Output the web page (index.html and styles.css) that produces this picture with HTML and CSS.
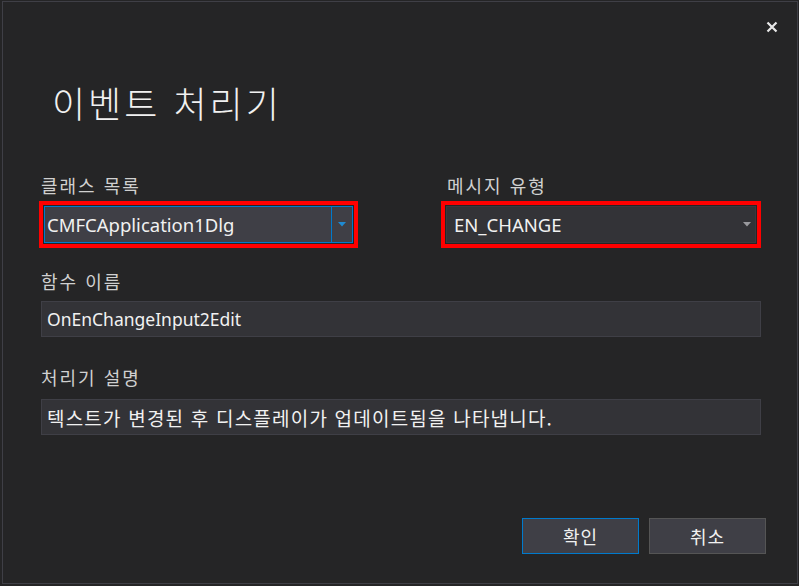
FILE: index.html
```html
<!DOCTYPE html>
<html lang="ko">
  <head>
    <meta charset="UTF-8" />
    <meta name="viewport" content="width=device-width, initial-scale=1.0" />
    <title>이벤트 처리기</title>
    <link rel="stylesheet" href="styles.css">
  </head>

  <body>
    <div class="dialog">
      <div class="dialog-head">
        <button class="close-btn" type="button" aria-label="닫기">
          <svg width="12" height="12" viewBox="0 0 12 12">
            <path d="M1.5 1.5 L10.5 10.5 M10.5 1.5 L1.5 10.5" stroke="#e8e8e8" stroke-width="2.2" fill="none" />
          </svg>
        </button>
      </div>

      <h1 class="title">이벤트 처리기</h1>

      <div class="row-two">
        <div class="field">
          <div class="label">클래스 목록</div>
          <div class="mark">
            <div class="combo active">
              <span class="combo-text">CMFCApplication1Dlg</span>
              <span class="combo-arrow">
                <svg width="8" height="5" viewBox="0 0 8 5"><path d="M0 0 H8 L4 4.5 Z" fill="#1f8ad2" /></svg>
              </span>
            </div>
          </div>
        </div>
        <div class="field">
          <div class="label">메시지 유형</div>
          <div class="mark">
            <div class="combo">
              <span class="combo-text">EN_CHANGE</span>
              <span class="combo-arrow">
                <svg width="8" height="5" viewBox="0 0 8 5"><path d="M0 0 H8 L4 4.5 Z" fill="#9a9a9e" /></svg>
              </span>
            </div>
          </div>
        </div>
      </div>

      <div class="label label-func">함수 이름</div>
      <div class="textbox">OnEnChangeInput2Edit</div>

      <div class="label label-desc">처리기 설명</div>
      <div class="textbox textbox-ko">텍스트가 변경된 후 디스플레이가 업데이트됨을 나타냅니다.</div>

      <div class="buttons">
        <button class="btn btn-ok" type="button">확인</button>
        <button class="btn" type="button">취소</button>
      </div>
    </div>
  </body>
</html>
```

FILE: styles.css
```css
html, body {
  margin: 0;
  padding: 0;
  background-color: #252526;
}

body {
  width: 799px;
  height: 586px;
  overflow: hidden;
  font-family: "Noto Sans", "Noto Sans CJK KR", sans-serif;
  color: #f1f1f1;
}

.dialog {
  box-sizing: border-box;
  width: 796px;
  height: 583px;
  margin: 1px 0 0 2px;
  border: 1px solid #3f3f46;
  background-color: #252526;
  padding: 0 35px 0 36px;
  display: flex;
  flex-direction: column;
}

.dialog-head {
  display: flex;
  justify-content: flex-end;
  margin-right: -16px;
  padding-top: 19px;
}

.close-btn {
  border: 0;
  padding: 0;
  background: none;
  width: 12px;
  height: 12px;
  display: block;
}

.close-btn svg {
  display: block;
}

.title {
  margin: 47px 0 0 13px;
  font-family: "Noto Sans CJK KR", sans-serif;
  font-weight: 300;
  font-size: 36px;
  line-height: 44px;
  letter-spacing: 3px;
  color: #f1f1f1;
}

.label {
  font-family: "Noto Sans CJK KR", sans-serif;
  font-size: 18px;
  line-height: 24px;
  letter-spacing: 2px;
  color: #d0d0d0;
  padding-left: 2px;
}

.row-two {
  display: flex;
  gap: 83px;
  margin-top: 49px;
}

.field {
  width: 319px;
}

.field + .field {
  width: 320px;
}

.field + .field .label {
  padding-left: 6px;
}

.mark {
  margin-top: 4px;
  border: 4px solid #ff0000;
  padding: 1px;
}

.combo {
  box-sizing: border-box;
  height: 37px;
  display: flex;
  align-items: center;
  background-color: #333337;
  border: 1px solid #3a3a3f;
}

.combo.active {
  background-color: #3f3f46;
  border-color: #007acc;
}

.combo-text {
  flex: 1;
  padding-left: 7px;
  font-size: 18.5px;
}

.combo.active .combo-text {
  padding-left: 2px;
}

.combo-arrow {
  width: 16px;
  align-self: stretch;
  display: flex;
  align-items: center;
  justify-content: center;
}

.combo.active .combo-arrow {
  width: 20px;
  border-left: 1px solid #007acc;
}

.label-func {
  margin-top: 21px;
}

.label-desc {
  margin-top: 28px;
}

.textbox {
  box-sizing: border-box;
  margin: 8px 0 0 2px;
  width: 720px;
  height: 36px;
  padding: 0 5px;
  display: flex;
  align-items: center;
  background-color: #333337;
  border: 1px solid #3f3f46;
  font-size: 17.5px;
  color: #f1f1f1;
}

.label-desc + .textbox {
  margin-top: 10px;
}

.textbox-ko {
  font-family: "Noto Sans CJK KR", sans-serif;
  font-size: 19px;
  letter-spacing: 1.2px;
}

.buttons {
  display: flex;
  justify-content: flex-end;
  gap: 10px;
  margin: auto -4px 29px 0;
}

.btn {
  box-sizing: border-box;
  width: 117px;
  height: 36px;
  background-color: #3f3f46;
  border: 1px solid #555555;
  color: #f1f1f1;
  font-family: "Noto Sans CJK KR", sans-serif;
  font-size: 18px;
  letter-spacing: 1px;
  padding: 0;
}

.btn-ok {
  border-color: #007acc;
}
```
